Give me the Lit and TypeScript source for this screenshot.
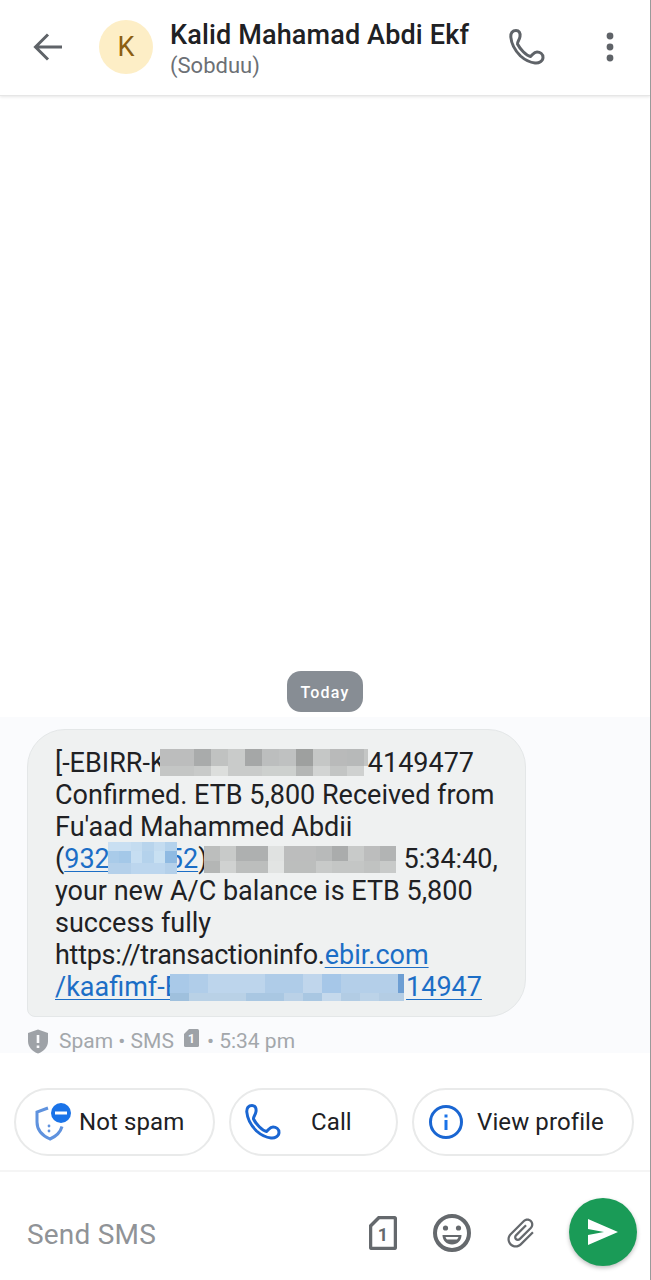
import { LitElement, html, css, svg } from "lit";
import { customElement } from "lit/decorators.js";

const PHONE = svg`<path d="M7 1.500C3.500 1.500 1.500 4 1.800 8 2.300 14 5.500 21 11.500 27 16 31 21 33.500 26 34 30 34.500 34 32 34 28.500 34 25 31 23 28 23 25 23 24 25.500 21.500 27.500 17 26.500 11 20 8.500 15 8 13 10.500 11 11 7.500 11.500 4 10 1.500 7 1.500z" fill="none" stroke="currentColor" stroke-width="3" stroke-linejoin="round"/>`;

// pixelated areas, one row of colours per band
interface Redact {
  cell: number;
  lastCell?: number;
  bands: [number, string[]][];
}

const REDACT_ID: Redact = {
  cell: 17,
  lastCell: 4,
  bands: [
    [17, ["#bcbdbd", "#bcbdbd", "#a9abab", "#c0c2c1", "#c9cbca", "#a5a7a7", "#bcbebe", "#bfc1c1", "#9ea09f", "#c5c7c6", "#b9baba", "#b7b9b9", "#c4c6c5"]],
    [10, ["#c4c6c5", "#c4c6c5", "#c8cac9", "#dcdedc", "#c9cbca", "#c9cbca", "#cdd0ce", "#cdd0ce", "#b4b6b5", "#d2d4d3", "#c3c5c4", "#cfd1d0", "transparent"]],
  ],
};

const REDACT_DATE: Redact = {
  cell: 16,
  bands: [
    [15, ["#bcbebd", "#c8cac9", "#aeb0b0", "#aeb0b0", "#e0e2e1", "#bcbdbd", "#bcbdbd", "#b8baba", "#aaacac", "#c8cac9", "#bcbdbd", "#b2b4b4"]],
    [12, ["#b4b6b5", "#d0d2d1", "#bcbebd", "#bcbebd", "#e2e4e3", "#bcbebd", "#bcbebd", "#c8cac9", "#c4c6c5", "#c4c6c5", "#c0c2c1", "#c8cac9"]],
  ],
};

const REDACT_PHONE: Redact = {
  cell: 11.5,
  bands: [
    [9, ["#c9dff2", "#c9dff2", "#c4dcf0", "#b8d4ec", "#c4dcf0", "#b4d2ec"]],
    [12, ["#a9cbe9", "#a4c8e8", "#c6def2", "#b4d2ec", "#c8e0f2", "#8fbae2"]],
    [11, ["#b4d0ea", "#b4d0ea", "#bcd6ee", "#bcd6ee", "#bcd6ee", "#b4d0ea"]],
  ],
};

const REDACT_LINK: Redact = {
  cell: 19,
  lastCell: 6,
  bands: [
    [19, ["#a9c9e8", "#b0cde9", "#bdd5ec", "#bdd5ec", "#bdd5ec", "#afcce8", "#afcce8", "#c0d6ec", "#a6c7e8", "#b4cfe9", "#b4cfe9", "#b4cfe9", "#6d9ed3"]],
    [8, ["#9fc0dd", "#b9d1e6", "#b9d1e6", "#b9d1e6", "#a9c7e2", "#a9c7e2", "#bad1e7", "#a9c7e2", "#c5d9ec", "#b2cce4", "#bcd3e8", "#b4cde4", "#b4cde4"]],
  ],
};

@customElement("app-root")
export class AppRoot extends LitElement {
  static styles = css`
    :host {
      display: flex;
      flex-direction: column;
      box-sizing: border-box;
      height: 1280px;
      border-right: 1px solid #9a9a9a;
      background: #fff;
      color: #202124;
      font-family: Roboto, "Liberation Sans", sans-serif;
      overflow: hidden;
    }
    svg {
      display: block;
      flex: none;
    }

    .header {
      flex: none;
      box-sizing: border-box;
      height: 96px;
      display: flex;
      align-items: center;
      padding: 0 23px 2px 33px;
      border-bottom: 1px solid #e6e6e6;
      box-shadow: 0 1px 3px rgba(0, 0, 0, 0.1);
      color: #5f6368;
    }
    .avatar {
      width: 54px;
      height: 54px;
      margin-left: 36px;
      border-radius: 50%;
      background: #fdeec6;
      color: #8c5e12;
      font-size: 27px;
      display: flex;
      align-items: center;
      justify-content: center;
      flex: none;
    }
    .who {
      margin: 7px 0 0 17px;
      flex: 1;
    }
    .name {
      font-size: 27px;
      font-weight: 500;
      letter-spacing: 0.15px;
      line-height: 32px;
      color: #202124;
      white-space: nowrap;
    }
    .sub {
      font-size: 22px;
      line-height: 30px;
      color: #6c7075;
    }
    .dots {
      margin-left: 61px;
      margin-right: 13px;
    }

    .empty {
      flex: 1;
      display: flex;
      flex-direction: column;
      justify-content: flex-end;
      align-items: center;
      padding: 0 1px 5px 0;
    }
    .today {
      box-sizing: border-box;
      width: 76px;
      height: 41px;
      padding: 1px 0 0 1px;
      border-radius: 14px;
      background: #878d94;
      color: #fff;
      font-size: 16px;
      font-weight: 500;
      letter-spacing: 1.2px;
      display: flex;
      align-items: center;
      justify-content: center;
    }

    .thread {
      flex: none;
      height: 336px;
      box-sizing: border-box;
      padding: 12px 27px 0;
      background: #fafbfd;
    }
    .bubble {
      box-sizing: border-box;
      width: 499px;
      height: 288px;
      padding: 17px 0 0 27px;
      border: 1px solid #e4e7e8;
      border-radius: 38px 38px 38px 8px;
      background: #eff1f1;
      font-size: 27px;
    }
    .line {
      height: 32px;
      line-height: 32px;
      white-space: nowrap;
    }
    .tight {
      letter-spacing: -0.28px;
    }
    a {
      color: #1c6ec6;
      text-decoration: underline;
      text-decoration-thickness: 1px;
      text-underline-offset: 3px;
    }
    /* pixelation lies over the characters it hides */
    .redact {
      position: relative;
      z-index: 1;
      display: inline-flex;
      flex-direction: column;
      vertical-align: top;
    }
    .band {
      display: flex;
    }
    .id { margin: 2px 0 0 -7px; }
    .phone { margin: -1px -9px 0 -2px; }
    .date { margin: 3px 8px 0 -4px; }
    .link { margin: 3px 2px 0 -10px; }

    .meta {
      display: flex;
      align-items: center;
      height: 24px;
      margin-top: 12px;
      color: #a3a7ab;
      font-size: 21px;
    }
    .meta .label {
      margin-left: 10px;
    }
    .meta .sim {
      margin: -6px 8px 0 10px;
    }

    .chips {
      flex: none;
      display: flex;
      gap: 14px;
      padding: 35px 14px 14px;
    }
    .chip {
      box-sizing: border-box;
      height: 68px;
      display: flex;
      align-items: center;
      border: 2px solid #e9eaea;
      border-radius: 34px;
      font-size: 24px;
      letter-spacing: 0.1px;
      color: #202124;
    }
    .chip-spam { width: 201px; padding-left: 18px; gap: 7px; }
    .chip-call { width: 169px; padding-left: 14px; gap: 30px; color: #1a66d2; }
    .chip-call span { color: #202124; }
    .chip-info { width: 222px; padding-left: 15px; gap: 14px; }

    .composer {
      flex: none;
      height: 110px;
      box-sizing: border-box;
      display: flex;
      align-items: center;
      padding: 0 13px 0 27px;
      border-top: 2px solid #f5f5f5;
      color: #65696d;
    }
    .placeholder {
      flex: 1;
      margin-top: 17px;
      font-size: 28px;
      letter-spacing: 0.2px;
      color: #909397;
    }
    .tool {
      margin-top: 13px;
    }
    .send {
      width: 68px;
      height: 68px;
      margin-left: 30px;
      margin-top: 12px;
      border-radius: 50%;
      background: #1a9b57;
      box-shadow: 0 2px 4px rgba(0, 0, 0, 0.25);
      display: flex;
      align-items: center;
      justify-content: center;
    }
  `;

  private redact(r: Redact, cls: string) {
    return html`<span class="redact ${cls}">
      ${r.bands.map(
        ([h, colors]) => html`<span class="band" style="height:${h}px">
          ${colors.map((c, i) => {
            const w = r.lastCell && i === colors.length - 1 ? r.lastCell : r.cell;
            return html`<span style="width:${w}px;background:${c}"></span>`;
          })}
        </span>`
      )}
    </span>`;
  }

  private renderHeader() {
    return html`<div class="header">
      <svg width="30" height="28" viewBox="0 0 30 28" fill="none" stroke="currentColor" stroke-width="3">
        <path d="M29 14H3M15 1.500 2.500 14 15 26.500" />
      </svg>
      <div class="avatar">K</div>
      <div class="who">
        <div class="name">Kalid Mahamad Abdi Ekf</div>
        <div class="sub">(Sobduu)</div>
      </div>
      <svg width="36" height="36" viewBox="0 0 36 36">${PHONE}</svg>
      <svg class="dots" width="8" height="30" viewBox="0 0 8 30" fill="currentColor">
        <circle cx="4" cy="4" r="3.400" /><circle cx="4" cy="15" r="3.400" /><circle cx="4" cy="26" r="3.400" />
      </svg>
    </div>`;
  }

  private renderBubble() {
    return html`<div class="bubble">
      <div class="line">[-EBIRR-K${this.redact(REDACT_ID, "id")}4149477</div>
      <div class="line">Confirmed. ETB 5,800 Received from</div>
      <div class="line">Fu'aad Mahammed Abdii</div>
      <div class="line">(<a>932</a>${this.redact(REDACT_PHONE, "phone")}<a>52</a>)${this.redact(REDACT_DATE, "date")}5:34:40,</div>
      <div class="line">your new A/C balance is ETB 5,800</div>
      <div class="line">success fully</div>
      <div class="line"><span class="tight">https://transactioninfo.</span><a>ebir.com</a></div>
      <div class="line"><a>/kaafimf-E</a>${this.redact(REDACT_LINK, "link")}<a>14947</a></div>
    </div>`;
  }

  private renderMeta() {
    return html`<div class="meta">
      <svg width="22" height="25" viewBox="0 0 22 25">
        <path d="M11 .5 1 4v8c0 6 4.200 10.500 10 12.500C16.800 22.500 21 18 21 12V4z" fill="#9ea2a7" />
        <path d="M11 6v8M11 16.500v2.500" stroke="#fafbfd" stroke-width="2.600" />
      </svg>
      <span class="label">Spam • SMS</span>
      <svg class="sim" width="15" height="18" viewBox="0 0 15 18">
        <path d="M5 0h8.500A1.500 1.500 0 0 1 15 1.500v15a1.500 1.500 0 0 1-1.500 1.500h-12A1.500 1.500 0 0 1 0 16.500V5z" fill="#9ea2a7" />
        <text x="7.500" y="14" font-size="12" font-weight="700" text-anchor="middle" fill="#fafbfd">1</text>
      </svg>
      <span>• 5:34 pm</span>
    </div>`;
  }

  private renderChips() {
    return html`<div class="chips">
      <div class="chip chip-spam">
        <svg width="38" height="38" viewBox="0 0 38 38">
          <path d="M14 5 3 9v10c0 7.500 5 13.500 13 17 6-2.600 10.500-7 12-12.500" fill="none" stroke="#5f92de" stroke-width="3" />
          <circle cx="15" cy="23" r="1.400" fill="#5f92de" /><circle cx="15" cy="28" r="1.400" fill="#5f92de" />
          <circle cx="27" cy="10" r="10" fill="#1a73e8" />
          <rect x="21" y="8.500" width="12" height="3" fill="#fff" />
        </svg>
        <span>Not spam</span>
      </div>
      <div class="chip chip-call">
        <svg width="36" height="36" viewBox="0 0 36 36">${PHONE}</svg>
        <span>Call</span>
      </div>
      <div class="chip chip-info">
        <svg width="34" height="34" viewBox="0 0 34 34">
          <circle cx="17" cy="17" r="15.500" fill="none" stroke="#1a66d2" stroke-width="3" />
          <rect x="15.500" y="15" width="3" height="10" fill="#1a73e8" />
          <rect x="15.500" y="9.500" width="3" height="3" fill="#1a73e8" />
        </svg>
        <span>View profile</span>
      </div>
    </div>`;
  }

  private renderComposer() {
    return html`<div class="composer">
      <div class="placeholder">Send SMS</div>
      <svg class="tool" width="28" height="34" viewBox="0 0 28 34">
        <path d="M10 1.500h14.500a2 2 0 0 1 2 2v27a2 2 0 0 1-2 2h-21a2 2 0 0 1-2-2V10z" fill="none" stroke="currentColor" stroke-width="3.500" stroke-linejoin="round" />
        <text x="14" y="25" font-size="18" font-weight="700" text-anchor="middle" fill="currentColor">1</text>
      </svg>
      <svg class="tool" style="margin-left:36px" width="38" height="38" viewBox="0 0 38 38">
        <circle cx="19" cy="19" r="17" fill="none" stroke="currentColor" stroke-width="4" />
        <circle cx="12.500" cy="14" r="2.600" fill="currentColor" />
        <circle cx="25.500" cy="14" r="2.600" fill="currentColor" />
        <path d="M9.500 21h19c0 5.500-4 9.500-9.500 9.500S9.500 26.500 9.500 21z" fill="currentColor" />
        <path d="M12.500 23h13c-.5 1.200-1 2-1.500 2.500H14c-.6-.5-1.200-1.300-1.500-2.500z" fill="#fff" />
      </svg>
      <svg class="tool" style="margin-left:32px" width="36" height="36" viewBox="0 0 24 24" fill="#65696d">
        <path transform="rotate(45 12 12)" d="M16.500 6v11.500c0 2.210-1.790 4-4 4s-4-1.790-4-4V5c0-1.380 1.120-2.500 2.500-2.500s2.500 1.120 2.500 2.500v10.500c0 .55-.45 1-1 1s-1-.45-1-1V6H10v9.500c0 1.380 1.120 2.500 2.500 2.500s2.500-1.120 2.500-2.500V5c0-2.210-1.790-4-4-4S7 2.790 7 5v12.500c0 3.040 2.460 5.500 5.500 5.500s5.500-2.460 5.500-5.500V6h-1.500z" />
      </svg>
      <div class="send">
        <svg width="30" height="26" viewBox="0 0 30 26" fill="#fff">
          <path d="M0 0 30 13 0 26 0 16 16 13 0 10z" />
        </svg>
      </div>
    </div>`;
  }

  render() {
    return html`
      ${this.renderHeader()}
      <div class="empty"><div class="today">Today</div></div>
      <div class="thread">${this.renderBubble()} ${this.renderMeta()}</div>
      ${this.renderChips()} ${this.renderComposer()}
    `;
  }
}
